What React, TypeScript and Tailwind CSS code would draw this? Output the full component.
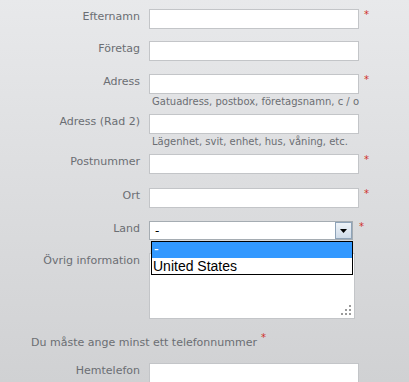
import React from "react";

function Star({ className = "" }: { className?: string }) {
  return (
    <span className={`text-[#d0302a] text-[10px] leading-[10px] font-['DejaVu_Sans',sans-serif] ${className}`}>*</span>
  );
}

function Row({
  label,
  required,
  hint,
  className = "",
}: {
  label: string;
  required?: boolean;
  hint?: string;
  className?: string;
}) {
  return (
    <div className={`flex ${className}`}>
      <div className="w-[140px] shrink-0 text-right pt-[1px] text-[11px] leading-[13px] text-[#6b6e73]">
        {label}
      </div>
      <div className="ml-[9px] flex flex-col">
        <div className="flex items-start">
          <div className="w-[210px] h-[20px] border border-[#c3c5c8] bg-white" />
          {required && <Star className="ml-[5px] mt-[1px]" />}
        </div>
        {hint && (
          <div className="mt-[2px] pl-[3px] text-[10px] leading-[12px] text-[#6b6e73] whitespace-nowrap">
            {hint}
          </div>
        )}
      </div>
    </div>
  );
}

export default function App() {
  return (
    <div className="w-[409px] h-[382px] overflow-hidden bg-gradient-to-b from-[#e8e9eb] to-[#d0d1d3] font-['DejaVu_Sans',sans-serif]">
      <div className="flex flex-col">
        <Row label="Efternamn" required className="mt-[9px]" />
        <Row label="Företag" className="mt-[12px]" />
        <Row label="Adress" required hint="Gatuadress, postbox, företagsnamn, c / o" className="mt-[13px]" />
        <Row label="Adress (Rad 2)" hint="Lägenhet, svit, enhet, hus, våning, etc." className="mt-[6px]" />
        <Row label="Postnummer" required className="mt-[6px]" />
        <Row label="Ort" required className="mt-[14px]" />

        {/* Land select with open dropdown */}
        <div className="flex mt-[13px] relative z-10">
          <div className="w-[140px] shrink-0 text-right pt-[1px] text-[11px] leading-[13px] text-[#6b6e73]">Land</div>
          <div className="ml-[9px] flex items-start">
            <div className="relative w-[204px] h-[19px] border border-[#a5acb2] bg-white">
              <div className="pl-[5px] pt-[2px] text-[12px] leading-[14px] text-black">-</div>
              <div className="absolute right-[0px] top-[0px] w-[17px] h-[17px] border border-[#8ea3b8] bg-gradient-to-b from-[#eef3f8] to-[#cfdbe8] flex items-center justify-center">
                <svg width="7" height="4" viewBox="0 0 7 4">
                  <path d="M0 0h7L3.5 4z" fill="#000" />
                </svg>
              </div>
              <div className="absolute left-[1px] top-[19px] w-[202px] border border-black bg-white font-['Liberation_Sans',sans-serif]">
                <div className="h-[16px] bg-[#3399ff] text-white text-[14px] leading-[14px] pl-[2px]">-</div>
                <div className="h-[16px] text-black text-[14px] leading-[16px] pl-[1px]">United States</div>
              </div>
            </div>
            <Star className="ml-[6px] mt-[1px]" />
          </div>
        </div>

        {/* Textarea */}
        <div className="flex mt-[13px]">
          <div className="w-[140px] shrink-0 text-right pt-[1px] text-[11px] leading-[13px] text-[#6b6e73]">Övrig information</div>
          <div className="ml-[9px] relative w-[206px] h-[66px] border border-[#c3c5c8] bg-white">
            <svg className="absolute right-[3px] bottom-[3px]" width="10" height="10" viewBox="0 0 10 10">
              <rect x="8" y="0" width="2" height="2" fill="#9a9a9a" />
              <rect x="4" y="4" width="2" height="2" fill="#9a9a9a" />
              <rect x="8" y="4" width="2" height="2" fill="#9a9a9a" />
              <rect x="0" y="8" width="2" height="2" fill="#9a9a9a" />
              <rect x="4" y="8" width="2" height="2" fill="#9a9a9a" />
              <rect x="8" y="8" width="2" height="2" fill="#9a9a9a" />
            </svg>
          </div>
        </div>

        <div className="flex items-start mt-[17px] pl-[31px]">
          <span className="text-[11px] leading-[13px] text-[#6b6e73]">Du måste ange minst ett telefonnummer</span>
          <Star className="ml-[4px] -mt-[3px]" />
        </div>

        <Row label="Hemtelefon" className="mt-[14px]" />
      </div>
    </div>
  );
}
